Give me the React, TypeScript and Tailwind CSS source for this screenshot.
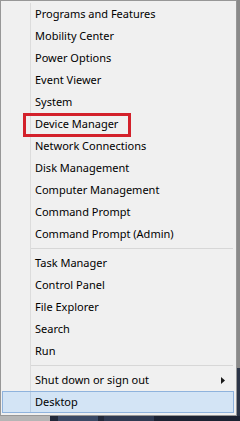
import React from "react";

const groups: string[][] = [
  [
    "Programs and Features",
    "Mobility Center",
    "Power Options",
    "Event Viewer",
    "System",
    "Device Manager",
    "Network Connections",
    "Disk Management",
    "Computer Management",
    "Command Prompt",
    "Command Prompt (Admin)",
  ],
  ["Task Manager", "Control Panel", "File Explorer", "Search", "Run"],
];

function Row({ label }: { label: string }) {
  return (
    <div className="flex h-[22px]">
      <div className="w-[30px] shrink-0 border-r border-[#dcdcdc]" />
      <div className="flex items-center pl-[4px] text-[11px] text-black">{label}</div>
    </div>
  );
}

function Separator() {
  return (
    <div className="flex h-[7px]">
      <div className="w-[30px] shrink-0 border-r border-[#dcdcdc]" />
      <div className="flex flex-1 items-center pr-[3px]">
        <div className="h-px w-full bg-[#d7d7d7]" />
      </div>
    </div>
  );
}

export default function App() {
  return (
    <div
      className="relative flex h-[421px] w-[240px] flex-col overflow-hidden bg-[#22293a]"
      style={{ fontFamily: '"Noto Sans", "Open Sans", sans-serif' }}
    >
      <div className="flex">
        <div className="flex w-[237px] flex-col border border-[#979797] bg-[#f0f0f0] py-[2px]">
          {groups.map((g, i) => (
            <React.Fragment key={i}>
              {g.map((label) => (
                <Row key={label} label={label} />
              ))}
              <Separator />
            </React.Fragment>
          ))}

          <div className="flex h-[22px] items-center">
            <div className="h-full w-[30px] shrink-0 border-r border-[#dcdcdc]" />
            <div className="flex flex-1 items-center pl-[4px] text-[11px] text-black">
              Shut down or sign out
            </div>
            <svg width="4" height="7" viewBox="0 0 4 7" className="mr-[11px]">
              <path d="M0 0 L4 3.5 L0 7 Z" fill="#1a1a1a" />
            </svg>
          </div>

          <div className="ml-[1px] mr-[2px] flex h-[22px] border border-[#8fb3dd] bg-[#d3e4f5]">
            <div className="w-[28px] shrink-0 border-r border-[#b9cde3]" />
            <div className="flex items-center pl-[4px] text-[11px] text-black">Desktop</div>
          </div>
        </div>

        <div className="flex w-[3px] flex-col">
          <div className="h-[368px] bg-[#8a8a8a]" />
          <div className="flex-1 bg-[#2c3548]" />
        </div>
      </div>

      <div className="flex h-[5px]">
        <div className="w-[50px] bg-[#b5b5b5]" />
        <div className="w-[8px]" />
        <div className="w-[40px] bg-[#3b4a66]" />
        <div className="w-[6px]" />
        <div className="w-[50px] bg-[#2f3a52]" />
        <div className="flex-1 bg-[#1c2232]" />
      </div>

      <div className="pointer-events-none absolute left-[23px] top-[113px] h-[24px] w-[108px] border-[3px] border-[#d3212b]" />
    </div>
  );
}
